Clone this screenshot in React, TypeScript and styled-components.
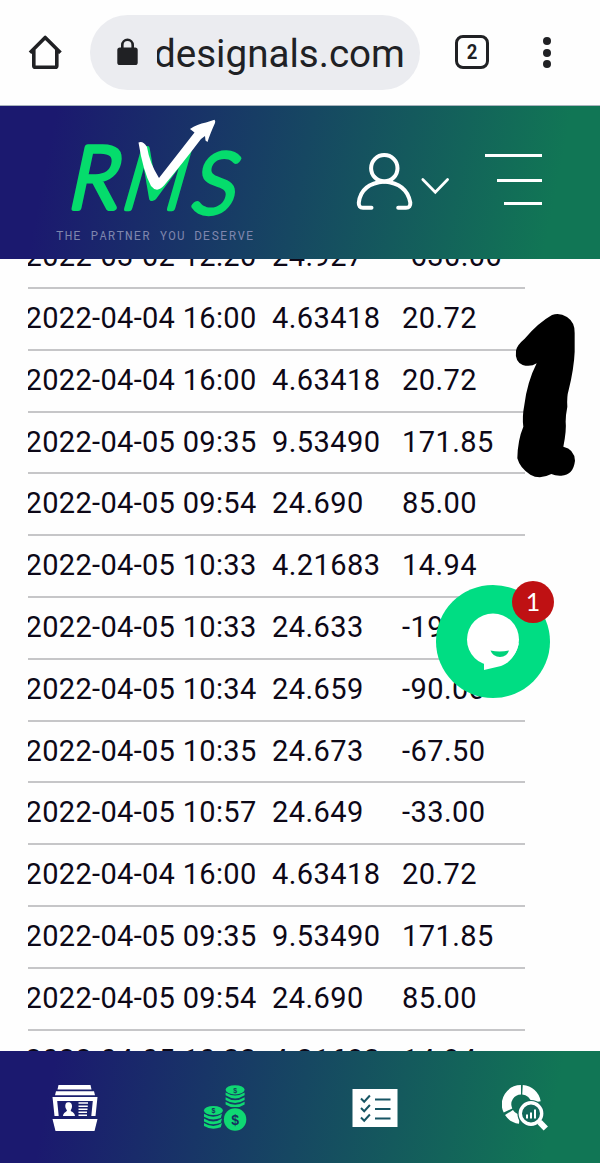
import React from "react";
import styled, { createGlobalStyle } from "styled-components";

const Global = createGlobalStyle`
  body { margin: 0; background: #fefefe; }
  * { box-sizing: border-box; }
`;

const gradient = "linear-gradient(101deg, #1b196f 9%, #117655 91%)";

const Page = styled.div`
  position: relative;
  width: 600px;
  height: 1163px;
  display: flex;
  flex-direction: column;
  overflow: hidden;
  background: #fefefe;
  font-family: Roboto, sans-serif;
`;

const BrowserBar = styled.div`
  height: 106px;
  flex: none;
  display: flex;
  align-items: center;
  padding: 0 41px 1px 27px;
  border-bottom: 1px solid #a9b4bd;
  color: #202124;
`;

const AddressPill = styled.div`
  width: 330px;
  height: 75px;
  margin-left: 27px;
  border-radius: 38px;
  background: #ebecf0;
  display: flex;
  align-items: center;
  padding-left: 27px;
`;

const AddressText = styled.div`
  margin-left: 19px;
  width: 255px;
  overflow: hidden;
  white-space: nowrap;
  font-size: 38.6px;
  line-height: 60px;
  padding-top: 4px;
  text-indent: -3px;
`;

const TabCount = styled.div`
  width: 34px;
  height: 34px;
  margin-left: 35px;
  border: 3.5px solid #202124;
  border-radius: 8px;
  display: flex;
  align-items: center;
  justify-content: center;
  font-size: 21px;
  font-weight: 700;
`;

const TabDigit = styled.span`
  transform: scaleX(0.88);
`;

const MoreDots = styled.div`
  margin-left: 54px;
  padding-top: 1px;
  display: flex;
  flex-direction: column;
  gap: 3.2px;
`;

const Dot = styled.span`
  width: 8px;
  height: 8px;
  border-radius: 50%;
  background: #202124;
`;

const Header = styled.header`
  height: 153px;
  flex: none;
  display: flex;
  background: ${gradient};
`;

const Brand = styled.div`
  width: 230px;
  margin-left: 40px;
  display: flex;
  flex-direction: column;
`;

const Tagline = styled.div`
  margin: -2px 0 0 16px;
  white-space: nowrap;
  font-family: "Roboto Mono", "Liberation Mono", monospace;
  font-size: 12.6px;
  line-height: 14px;
  letter-spacing: 1.08px;
  color: #7f86ad;
`;

const HeaderActions = styled.div`
  margin-left: 85px;
  display: flex;
  align-items: flex-start;
  padding-top: 45px;
`;

const MenuLines = styled.div`
  width: 57px;
  margin: 3px 0 0 35px;
  display: flex;
  flex-direction: column;
  align-items: flex-end;
`;

const MenuLine = styled.span<{ $w: number; $gap: number }>`
  width: ${(p) => p.$w}px;
  height: 3.4px;
  margin-bottom: ${(p) => p.$gap}px;
  background: #fff;
`;

const Content = styled.main`
  flex: 1;
  min-height: 0;
  overflow: hidden;
  padding-left: 28px;
`;

const Table = styled.div`
  width: 497px;
  overflow: hidden;
  margin-top: -31.8px;
`;

const Row = styled.div`
  height: 61.8px;
  display: grid;
  grid-template-columns: 244px 130px 1fr;
  border-bottom: 2px solid #c6c6c8;
  color: #0d0817;
  font-size: 29px;
  letter-spacing: 0.45px;
  line-height: 59.4px;
  white-space: nowrap;
`;

const Cell = styled.span<{ $first?: boolean }>`
  margin-left: ${(p) => (p.$first ? "-2.4px" : "0")};
  letter-spacing: ${(p) => (p.$first ? "0.32px" : "0.45px")};
`;

const BottomNav = styled.nav`
  height: 112px;
  flex: none;
  display: grid;
  grid-template-columns: repeat(4, 150px);
  background: ${gradient};
`;

const NavItem = styled.div`
  display: flex;
  justify-content: center;
  padding-top: 34px;
`;

const ChatButton = styled.div`
  position: absolute;
  left: 436px;
  top: 585px;
  width: 114px;
  height: 113px;
  border-radius: 50%;
  background: #00dd83;
`;

const ChatBadge = styled.div`
  position: absolute;
  left: 76px;
  top: -4px;
  width: 42px;
  height: 42px;
  border-radius: 50%;
  background: #bf1113;
  color: #fff;
  font-family: Lato, sans-serif;
  font-size: 25px;
  line-height: 41px;
  text-align: center;
`;

const ChatGlyph = styled.svg`
  position: absolute;
  left: 30px;
  top: 27px;
`;

const Scribble = styled.svg`
  position: absolute;
  left: 490px;
  top: 300px;
`;

const rows = [
  ["2022-03-02 12:20", "24.927", "-630.00"],
  ["2022-04-04 16:00", "4.63418", "20.72"],
  ["2022-04-04 16:00", "4.63418", "20.72"],
  ["2022-04-05 09:35", "9.53490", "171.85"],
  ["2022-04-05 09:54", "24.690", "85.00"],
  ["2022-04-05 10:33", "4.21683", "14.94"],
  ["2022-04-05 10:33", "24.633", "-19.50"],
  ["2022-04-05 10:34", "24.659", "-90.00"],
  ["2022-04-05 10:35", "24.673", "-67.50"],
  ["2022-04-05 10:57", "24.649", "-33.00"],
  ["2022-04-04 16:00", "4.63418", "20.72"],
  ["2022-04-05 09:35", "9.53490", "171.85"],
  ["2022-04-05 09:54", "24.690", "85.00"],
  ["2022-04-05 10:33", "4.21683", "14.94"],
];

const HomeIcon = () => (
  <svg width="36" height="36" viewBox="0 0 36 36" fill="none" stroke="#202124" strokeWidth="3.6" strokeLinejoin="round">
    <path d="M3 18.7 18.2 3.500 33.5 18.7M6.8 15.500v16.2q0 1.6 1.6 1.6h19.8q1.6 0 1.6-1.6V15.500" />
  </svg>
);

const LockIcon = () => (
  <svg width="21" height="28" viewBox="0 0 21 28">
    <path d="M5.3 11V7a5.2 5.2 0 0 1 10.4 0v4" fill="none" stroke="#202124" strokeWidth="2.6" />
    <rect x="0.3" y="9.5" width="20.4" height="17.6" rx="2.6" fill="#202124" />
  </svg>
);

const LogoMark = () => (
  <svg width="230" height="124" viewBox="0 0 230 124">
    <g fill="#05dc6c" stroke="#05dc6c" strokeLinejoin="round" fontFamily="Lato, sans-serif" fontWeight="300">
      <text transform="translate(26 101.5) skewX(-12) scale(.94 1)" fontSize="86" strokeWidth="6">R</text>
      <text transform="translate(80 101.5) skewX(-16) scale(.79 1)" fontSize="83" strokeWidth="6.5">M</text>
      <text transform="translate(148.5 107) skewX(-13) scale(.98 1)" fontSize="84" strokeWidth="5">S</text>
    </g>
    <path
      fill="#fff"
      d="M98.5 36.5Q103 34.500 107 41 109.500 57 119 72L154.500 26.500 150 23Q157 18 166 16.500 171 15 174.500 13.800 175.700 15 175 17 170 28 167.500 36L165.500 34.500 165 30 161 33Q142 58 124 79.500 117 87.500 111 80 103 65 98.500 36.500Z"
    />
  </svg>
);

const UserIcon = () => (
  <svg width="60" height="60" viewBox="0 0 60 60" fill="none" stroke="#fff" strokeWidth="4" strokeLinecap="round">
    <circle cx="29.300" cy="17.200" r="13.200" />
    <path d="M16.500 56.700H8q-4.500 0-4.200-5Q6 32.500 29.300 30.500 52 32.500 55.300 51.700q.4 5-4.300 5H43.200" />
  </svg>
);

const ChevronIcon = () => (
  <svg width="35" height="60" viewBox="0 0 35 60" fill="none" stroke="#fff" strokeWidth="2.700" strokeLinecap="round">
    <path d="M7.800 28.500 20.300 41.200 32.600 28.500" />
  </svg>
);

const TradersIcon = () => (
  <svg width="46" height="46" viewBox="0 0 46 46" fill="#fff">
    <path d="M6.500 0h32l1 4.500h-34zM4 6.200h38l1 4H3zM.5 12h45L43.500 31h-4.200l1.500-15H5.200l1.500 15H2.500zM.5 34h45L42.500 46h-39z" />
    <path d="M16.200 17.300c3 0 4 2 3.800 4.500-.2 2-1 2.700-1.300 3.700.3 1.500 4 1.600 4.300 5.500H11c.3-3.500 3.500-4 4-5.500-.5-1-1.500-2-1.700-3.700-.2-2.500.7-4.500 2.900-4.500zM26.500 17.300h9.500v1.500h-9.500zM26.500 20.500h9.300V22h-9.300zM26.500 23.500h9v1.500h-9zM26.500 26.500h8.500V28h-8.500zM26.500 29.500h8.500V31h-8.500z" />
  </svg>
);

const stackRings = [0, 4.7, 9.2];

const CoinsIcon = () => (
  <svg width="46" height="46" viewBox="0 0 46 46" fill="#0fd873" fontFamily="Liberation Sans, sans-serif" fontWeight="700" textAnchor="middle">
    <g transform="translate(.8 0)">
      <ellipse cx="32.300" cy="4.800" rx="9.500" ry="4.600" />
      <ellipse cx="10.600" cy="25.500" rx="9.500" ry="4.600" />
      {stackRings.map((y) => (
        <g key={y}>
          <path d={`M22.800 ${7.5 + y}q9.500 6 19 0v2.800q-9.500 6.200-19 0z`} />
          <path d={`M1.200 ${28.7 + y}q9.500 6 18 0l-1.200 4.300q-9 3.500-16.800-1.200z`} />
        </g>
      ))}
      <circle cx="32.300" cy="34.500" r="12.500" fill="#17405f" />
      <circle cx="32.300" cy="34.500" r="11.200" />
      <text x="32.300" y="39.500" fontSize="14" fill="#17305f">$</text>
      <text x="32.300" y="7.500" fontSize="7" fill="#17405f">$</text>
      <text x="10.600" y="28" fontSize="7" fill="#17305f">$</text>
    </g>
  </svg>
);

const ChecklistIcon = () => (
  <svg width="46" height="46" viewBox="0 0 46 46">
    <rect x=".5" y="4" width="45" height="38" fill="#fff" />
    <g fill="none" stroke="#175564" strokeWidth="2">
      <path d="M9 13.500l3.200 3.200 5.700-6.200M9 23l3.200 3.200 5.700-6.200M9 32.500l3.200 3.200 5.700-6.200" />
      <path d="M23 14.500h15.500M23 24h15.500M23 33.500h15.500" />
    </g>
  </svg>
);

const AnalysisIcon = () => (
  <svg width="46" height="46" viewBox="0 0 46 46">
    <g fill="none" stroke="#fff" strokeWidth="9.500">
      <path d="M20.500 4.800A14.500 14.500 0 0 1 34 17" />
      <path d="M19 4.800A14.500 14.500 0 0 0 6 25.500" />
      <path d="M7 27.500A14.500 14.500 0 0 0 17.500 34" />
    </g>
    <circle cx="29" cy="28.500" r="13.600" fill="#13685a" />
    <circle cx="29" cy="28.500" r="10.700" fill="none" stroke="#fff" strokeWidth="3.400" />
    <path d="M24 29.500h2v4h-2zM28 27.500h2v6h-2zM32 24.500h2v9h-2z" fill="#fff" />
    <path d="M36.500 36l1.800 1.800" stroke="#fff" strokeWidth="3" />
    <path d="M37.500 37l6.300 6.500" stroke="#fff" strokeWidth="6" />
  </svg>
);

export default function App() {
  return (
    <Page>
      <Global />
      <BrowserBar>
        <HomeIcon />
        <AddressPill>
          <LockIcon />
          <AddressText>designals.com</AddressText>
        </AddressPill>
        <TabCount><TabDigit>2</TabDigit></TabCount>
        <MoreDots>
          <Dot />
          <Dot />
          <Dot />
        </MoreDots>
      </BrowserBar>
      <Header>
        <Brand>
          <LogoMark />
          <Tagline>THE PARTNER YOU DESERVE</Tagline>
        </Brand>
        <HeaderActions>
          <UserIcon />
          <ChevronIcon />
          <MenuLines>
            <MenuLine $w={57} $gap={21.6} />
            <MenuLine $w={45} $gap={19.6} />
            <MenuLine $w={38} $gap={0} />
          </MenuLines>
        </HeaderActions>
      </Header>
      <Content>
        <Table>
          {rows.map(([time, price, profit], i) => (
            <Row key={i}>
              <Cell $first>{time}</Cell>
              <Cell>{price}</Cell>
              <Cell>{profit}</Cell>
            </Row>
          ))}
        </Table>
      </Content>
      <BottomNav>
        <NavItem><TradersIcon /></NavItem>
        <NavItem><CoinsIcon /></NavItem>
        <NavItem><ChecklistIcon /></NavItem>
        <NavItem><AnalysisIcon /></NavItem>
      </BottomNav>
      <Scribble width="110" height="190" viewBox="0 0 330 570">
        <path d="M78 152Q80 136 104 116Q145 68 186 45Q208 36 231 51Q255 67 254 99L254 155Q252 205 236 270Q230 290 232 320Q227 345 227 365Q230 390 220 440Q253 447 255 482Q250 525 214 527Q197 528 184 522Q150 540 121 524Q90 505 82 475Q83 420 100 380Q96 350 103 315Q112 245 140 190Q122 202 98 195Q74 184 78 152Z" />
      </Scribble>
      <ChatButton>
        <ChatGlyph width="56" height="60" viewBox="0 0 56 60">
          <circle cx="27" cy="27.500" r="26" fill="#fff" />
          <path d="M52.800 31C50 45 42 51 35 54L18 58V50z" fill="#fff" />
          <path d="M24.500 38.500q9 1.800 18.500 0-2 6.500-9 6.500T24.500 38.500Z" fill="#00d27a" />
        </ChatGlyph>
        <ChatBadge>1</ChatBadge>
      </ChatButton>
    </Page>
  );
}
